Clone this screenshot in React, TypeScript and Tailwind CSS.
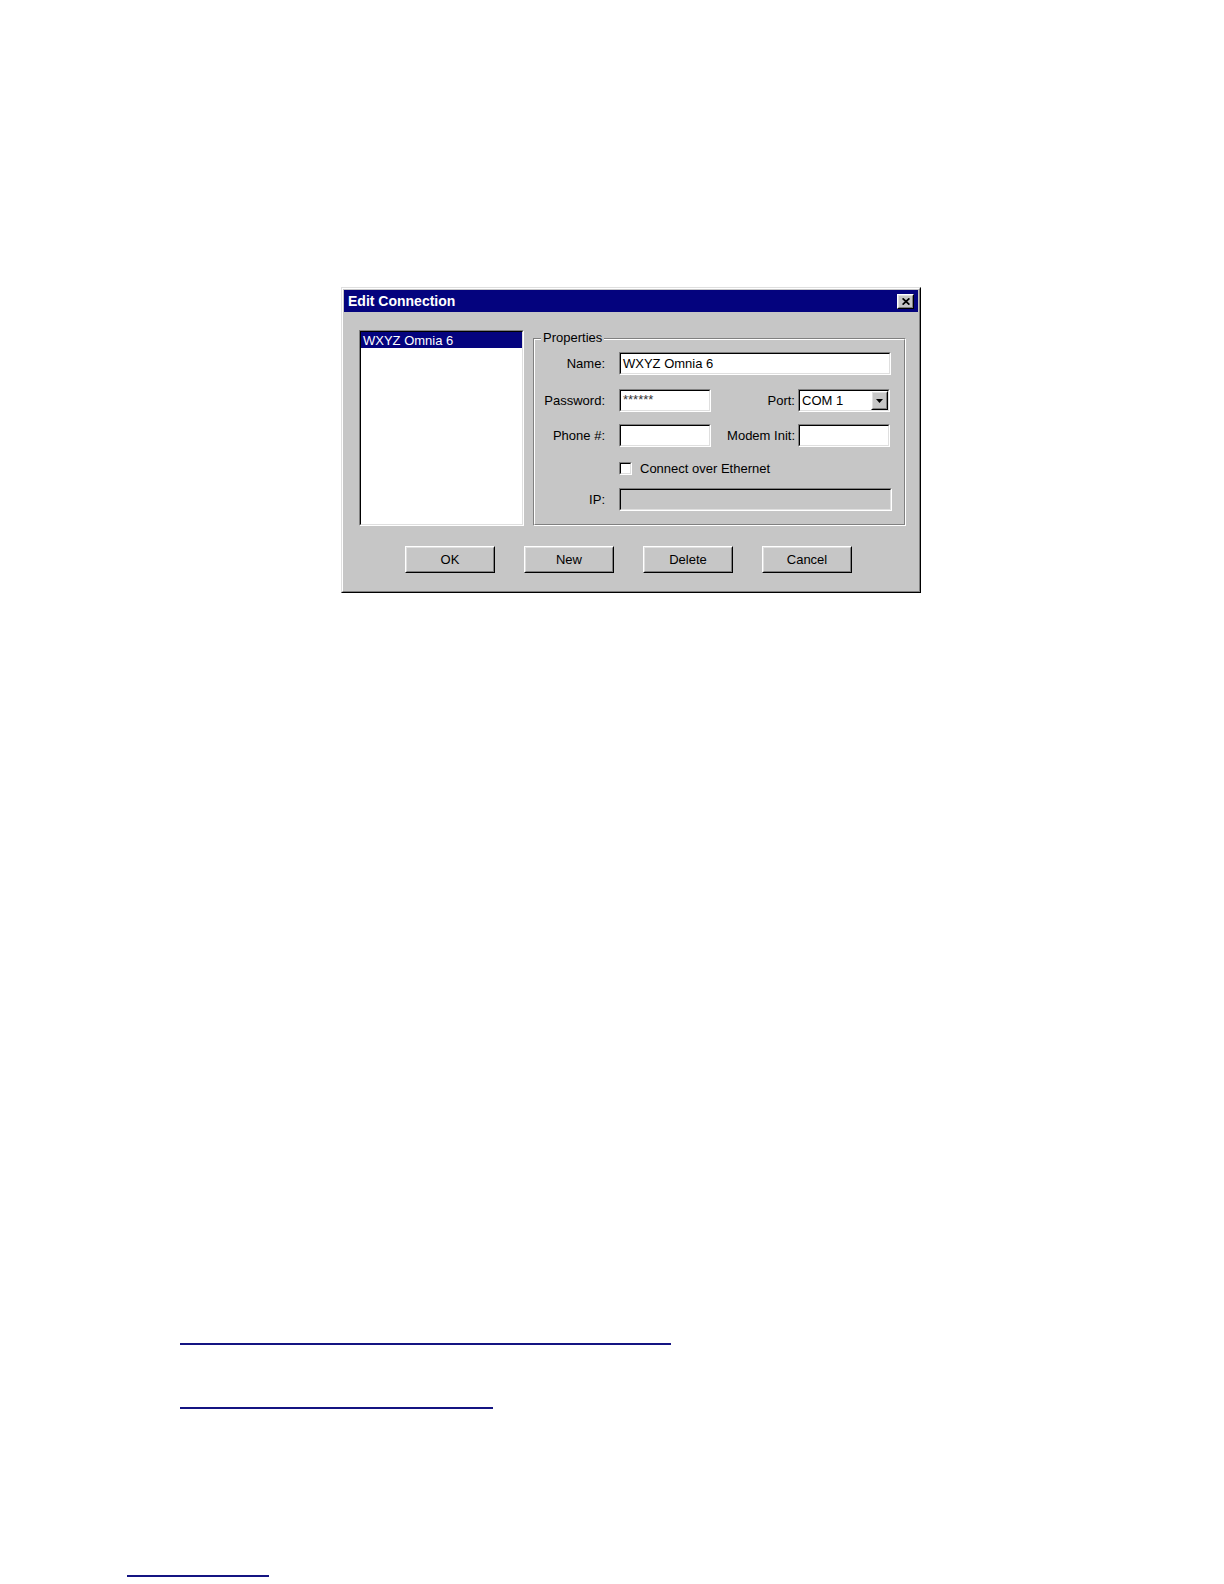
import type { ReactNode } from "react";

// Win98-style 3D edges, built from two nested 1px borders.
function Sunken({
  className = "",
  inner = "bg-white",
  children,
}: {
  className?: string;
  inner?: string;
  children?: ReactNode;
}) {
  return (
    <div
      className={`border border-t-[#808080] border-l-[#808080] border-r-white border-b-white ${className}`}
    >
      <div
        className={`h-full w-full border border-t-black border-l-black border-r-[#dfdfdf] border-b-[#dfdfdf] ${inner}`}
      >
        {children}
      </div>
    </div>
  );
}

function Raised({
  className = "",
  children,
}: {
  className?: string;
  children?: ReactNode;
}) {
  return (
    <div
      className={`border border-t-white border-l-white border-r-black border-b-black bg-[#c6c6c6] ${className}`}
    >
      <div className="h-full w-full border border-t-[#dfdfdf] border-l-[#dfdfdf] border-r-[#808080] border-b-[#808080] flex items-center justify-center">
        {children}
      </div>
    </div>
  );
}

function Label({ w, children }: { w: string; children: ReactNode }) {
  return (
    <span className={`${w} shrink-0 text-right text-[13px] leading-none text-black`}>
      {children}
    </span>
  );
}

function ComboBox({ value }: { value: string }) {
  return (
    <Sunken className="ml-[3px] w-[92px] h-[23px]" inner="bg-white flex items-center">
      <span className="pl-[2px] flex-1 text-[13px] leading-none text-black">{value}</span>
      <Raised className="w-[17px] h-[19px]">
        <svg width="7" height="4" viewBox="0 0 7 4" aria-hidden>
          <path d="M0 0 H7 L3.5 4 Z" fill="black" />
        </svg>
      </Raised>
    </Sunken>
  );
}

function GroupBox() {
  return (
    <div className="relative mt-[8px] w-[373px] h-[188px] border border-t-[#808080] border-l-[#808080] border-r-white border-b-white">
      <span className="absolute left-[7px] top-[-9px] px-[2px] bg-[#c6c6c6] text-[13px] leading-[15px] text-black">
        Properties
      </span>
      <div className="h-full w-full border border-t-white border-l-white border-r-[#808080] border-b-[#808080] flex flex-col">
        <div className="mt-[12px] h-[23px] flex items-center">
          <Label w="w-[70px]">Name:</Label>
          <Sunken className="ml-[14px] w-[272px] h-[23px]" inner="bg-white flex items-center">
            <span className="pl-[2px] text-[13px] leading-none text-black">WXYZ Omnia 6</span>
          </Sunken>
        </div>
        <div className="mt-[14px] h-[23px] flex items-center">
          <Label w="w-[70px]">Password:</Label>
          <Sunken className="ml-[14px] w-[92px] h-[23px]" inner="bg-white">
            <span className="block pl-[2px] pt-[2px] text-[13px] leading-[13px] text-[#333]">******</span>
          </Sunken>
          <Label w="w-[84px]">Port:</Label>
          <ComboBox value="COM 1" />
        </div>
        <div className="mt-[12px] h-[23px] flex items-center">
          <Label w="w-[70px]">Phone #:</Label>
          <Sunken className="ml-[14px] w-[92px] h-[23px]" />
          <Label w="w-[84px]">Modem Init:</Label>
          <Sunken className="ml-[3px] w-[92px] h-[23px]" />
        </div>
        <div className="mt-[15px] h-[13px] flex items-center">
          <Sunken className="ml-[84px] w-[13px] h-[13px]" />
          <span className="ml-[8px] text-[13px] leading-none text-black">Connect over Ethernet</span>
        </div>
        <div className="mt-[13px] h-[23px] flex items-center">
          <Label w="w-[70px]">IP:</Label>
          <Sunken className="ml-[14px] w-[273px] h-[23px]" inner="bg-[#c6c6c6]" />
        </div>
      </div>
    </div>
  );
}

function ListBox() {
  return (
    <Sunken className="w-[165px] h-[196px]" inner="bg-white">
      <div className="h-[16px] bg-[#04037e] pl-[2px] flex items-center">
        <span className="text-[13px] leading-none text-white">WXYZ Omnia 6</span>
      </div>
    </Sunken>
  );
}

function Dialog() {
  const buttons = ["OK", "New", "Delete", "Cancel"];
  return (
    <div className="w-[580px] h-[306px] bg-[#c6c6c6] border border-t-[#dfdfdf] border-l-[#dfdfdf] border-r-black border-b-black">
      <div className="h-full border border-t-white border-l-white border-r-[#808080] border-b-[#808080] p-px flex flex-col">
        <div className="h-[22px] shrink-0 bg-[#04037e] flex items-center justify-between pl-[4px] pr-[4px]">
          <span className="text-white font-bold text-[14px] leading-none">Edit Connection</span>
          <Raised className="w-[17px] h-[15px]">
            <svg width="8" height="7" viewBox="0 0 8 7" aria-hidden>
              <path d="M0.6 0.4 L7.4 6.6 M7.4 0.4 L0.6 6.6" stroke="black" strokeWidth="1.8" />
            </svg>
          </Raised>
        </div>
        <div className="mt-[18px] ml-[15px] flex items-start gap-[9px]">
          <ListBox />
          <GroupBox />
        </div>
        <div className="mt-[20px] flex justify-center gap-[29px] pr-[5px]">
          {buttons.map((b) => (
            <Raised key={b} className="w-[90px] h-[27px]">
              <span className="text-[13px] leading-none text-black">{b}</span>
            </Raised>
          ))}
        </div>
      </div>
    </div>
  );
}

export default function App() {
  return (
    <div className="w-[1224px] h-[1584px] bg-white pt-[287px] font-['Liberation_Sans',Arial,sans-serif]">
      <div className="ml-[341px]">
        <Dialog />
      </div>
      <div className="ml-[180px] mt-[750px] h-[2px] w-[491px] bg-[#141482]" />
      <div className="ml-[180px] mt-[62px] h-[2px] w-[313px] bg-[#141482]" />
      <div className="ml-[127px] mt-[166px] h-[2px] w-[142px] bg-[#141482]" />
    </div>
  );
}
